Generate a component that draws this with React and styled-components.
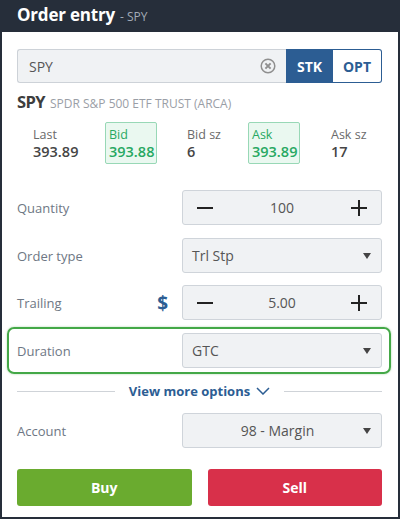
import styled, { createGlobalStyle } from 'styled-components';

const GlobalStyle = createGlobalStyle`
  html, body {
    margin: 0;
    padding: 0;
    background: #fff;
  }
  body {
    font-family: 'Open Sans', 'Liberation Sans', sans-serif;
  }
`;

const Panel = styled.div`
  width: 400px;
  height: 519px;
  box-sizing: border-box;
  border: 2px solid #262e3a;
  border-top: 0;
  background: #fff;
  display: flex;
  flex-direction: column;
`;

const Header = styled.div`
  height: 32px;
  background: #262e3a;
  display: flex;
  align-items: baseline;
  padding: 3px 15px 0;
  box-sizing: border-box;
  gap: 5px;
`;

const Title = styled.span`
  color: #fff;
  font-size: 17px;
  font-weight: 700;
  letter-spacing: -0.2px;
`;

const SubTitle = styled.span`
  color: #a3abb6;
  font-size: 12px;
`;

const Body = styled.div`
  flex: 1;
  padding: 17px 16px 0 15px;
  display: flex;
  flex-direction: column;
`;

const SearchRow = styled.div`
  display: flex;
  height: 34px;
`;

const SearchField = styled.div`
  flex: 1;
  display: flex;
  align-items: center;
  background: #f0f2f4;
  border: 1px solid #cdd2d8;
  border-right: 0;
  border-radius: 3px 0 0 3px;
  padding: 0 10px 0 11px;
  color: #555;
  font-size: 14px;
`;

const SearchText = styled.span`
  flex: 1;
`;

const Toggle = styled.button`
  width: ${(p) => (p.active ? 47 : 49)}px;
  border: 1px solid #2c5d93;
  border-left-width: ${(p) => (p.active ? 1 : 0)}px;
  border-radius: ${(p) => (p.active ? '0' : '0 3px 3px 0')};
  background: ${(p) => (p.active ? '#2c5d93' : '#fff')};
  color: ${(p) => (p.active ? '#fff' : '#2c5d93')};
  font-family: inherit;
  font-size: 14px;
  font-weight: 700;
  padding: 0;
`;

const SymbolLine = styled.div`
  margin-top: 9px;
  height: 20px;
  line-height: 20px;
  display: flex;
  align-items: baseline;
  gap: 5px;
  white-space: nowrap;
`;

const Symbol = styled.span`
  font-size: 16.5px;
  font-weight: 700;
  letter-spacing: -0.6px;
  color: #3d3d3d;
`;

const SymbolName = styled.span`
  font-size: 12px;
  color: #9a9ea6;
`;

const Quotes = styled.div`
  margin-top: 10px;
  display: grid;
  grid-template-columns: 77px 77px 66px 78px 1fr;
  padding-left: 11px;
`;

const Quote = styled.div`
  width: 52px;
  height: 42px;
  box-sizing: border-box;
  margin-left: ${(p) => (p.boxed ? '0' : '4px')};
  padding: 4px 3px;
  border: ${(p) => (p.boxed ? '1px solid #98d8b6' : '1px solid transparent')};
  background: ${(p) => (p.boxed ? '#eaf8f0' : 'transparent')};
  border-radius: 2px;
  color: ${(p) => (p.boxed ? '#27a862' : '#454545')};
  white-space: nowrap;
  ${(p) => !p.boxed && 'padding-left: 0;'}
`;

const QuoteLabel = styled.div`
  font-size: 12.5px;
  line-height: 16px;
  color: ${(p) => (p.green ? '#27a862' : '#6a6a6a')};
`;

const QuoteValue = styled.div`
  font-size: 14.5px;
  font-weight: 600;
  line-height: 18px;
`;

const FieldRow = styled.div`
  display: flex;
  align-items: center;
  margin-top: ${(p) => p.gap}px;
  ${(p) =>
    p.highlight &&
    `
    margin-left: -10px;
    margin-right: -9px;
    padding: 4px 7px 4px 8px;
    border: 2px solid #44a847;
    border-radius: 7px;
    box-shadow: 0 0 2px rgba(68, 168, 71, 0.5);
  `}
`;

const Label = styled.div`
  flex: 1;
  font-size: 13px;
  color: #6e7784;
  display: flex;
  align-items: center;
  justify-content: space-between;
  padding-right: 14px;
`;

const Dollar = styled.span`
  color: #2c5d93;
  font-size: 19px;
  font-weight: 700;
`;

const Control = styled.div`
  width: 200px;
  height: 35px;
  box-sizing: border-box;
  background: #f0f2f4;
  border: 1px solid #cfd4da;
  border-radius: 3px;
  display: flex;
  align-items: center;
  font-size: 14px;
  color: #555;
`;

const StepButton = styled.span`
  width: 44px;
  display: flex;
  justify-content: center;
`;

const StepValue = styled.span`
  flex: 1;
  text-align: center;
`;

const SelectText = styled.span`
  flex: 1;
  padding-left: 9px;
  text-align: ${(p) => (p.center ? 'center' : 'left')};
`;

const Caret = styled.span`
  width: 0;
  height: 0;
  border-left: 4px solid transparent;
  border-right: 4px solid transparent;
  border-top: 6px solid #444;
  margin-right: 10px;
`;

const Divider = styled.div`
  margin-top: 8px;
  display: flex;
  align-items: center;
  gap: 14px;
  &::before,
  &::after {
    content: '';
    flex: 1;
    height: 1px;
    background: #cfd3d8;
  }
`;

const MoreLink = styled.span`
  color: #2c5d93;
  font-size: 13px;
  font-weight: 700;
  display: flex;
  align-items: center;
  gap: 6px;
`;

const Actions = styled.div`
  margin-top: 21px;
  display: grid;
  grid-template-columns: 1fr 1fr;
  gap: 16px;
`;

const ActionButton = styled.button`
  height: 37px;
  border: 0;
  border-radius: 3px;
  background: ${(p) => (p.sell ? '#d8304a' : '#6aab2f')};
  color: #fff;
  font-family: inherit;
  font-size: 14px;
  font-weight: 700;
`;

const ClearIcon = () => (
  <svg width="16" height="16" viewBox="0 0 16 16">
    <circle cx="8" cy="8" r="6.8" fill="none" stroke="#8f8f8f" strokeWidth="1.5" />
    <path d="M5.4 5.4 L10.6 10.6 M10.6 5.4 L5.4 10.6" stroke="#8f8f8f" strokeWidth="2" />
  </svg>
);

const Minus = () => (
  <svg width="16" height="16" viewBox="0 0 16 16">
    <path d="M0 8 H16" stroke="#222" strokeWidth="2" />
  </svg>
);

const Plus = () => (
  <svg width="16" height="16" viewBox="0 0 16 16">
    <path d="M0 8 H16 M8 0 V16" stroke="#222" strokeWidth="2" />
  </svg>
);

const Chevron = () => (
  <svg width="14" height="8" viewBox="0 0 14 8">
    <path d="M1 1 L7 7 L13 1" fill="none" stroke="#2c5d93" strokeWidth="1.5" />
  </svg>
);

const Stepper = ({ value }) => (
  <Control>
    <StepButton>
      <Minus />
    </StepButton>
    <StepValue>{value}</StepValue>
    <StepButton>
      <Plus />
    </StepButton>
  </Control>
);

const Select = ({ value, center }) => (
  <Control>
    <SelectText center={center}>{value}</SelectText>
    <Caret />
  </Control>
);

const quotes = [
  { label: 'Last', value: '393.89' },
  { label: 'Bid', value: '393.88', boxed: true },
  { label: 'Bid sz', value: '6' },
  { label: 'Ask', value: '393.89', boxed: true },
  { label: 'Ask sz', value: '17' },
];

export default function App() {
  return (
    <>
      <GlobalStyle />
      <Panel>
        <Header>
          <Title>Order entry</Title>
          <SubTitle>- SPY</SubTitle>
        </Header>
        <Body>
          <SearchRow>
            <SearchField>
              <SearchText>SPY</SearchText>
              <ClearIcon />
            </SearchField>
            <Toggle active>STK</Toggle>
            <Toggle>OPT</Toggle>
          </SearchRow>

          <SymbolLine>
            <Symbol>SPY</Symbol>
            <SymbolName>SPDR S&amp;P 500 ETF TRUST (ARCA)</SymbolName>
          </SymbolLine>

          <Quotes>
            {quotes.map((q) => (
              <Quote key={q.label} boxed={q.boxed}>
                <QuoteLabel green={q.boxed}>{q.label}</QuoteLabel>
                <QuoteValue>{q.value}</QuoteValue>
              </Quote>
            ))}
          </Quotes>

          <FieldRow gap={26}>
            <Label>Quantity</Label>
            <Stepper value="100" />
          </FieldRow>
          <FieldRow gap={13}>
            <Label>Order type</Label>
            <Select value="Trl Stp" />
          </FieldRow>
          <FieldRow gap={12}>
            <Label>
              Trailing <Dollar>$</Dollar>
            </Label>
            <Stepper value="5.00" />
          </FieldRow>
          <FieldRow gap={7} highlight>
            <Label>Duration</Label>
            <Select value="GTC" />
          </FieldRow>

          <Divider>
            <MoreLink>
              View more options <Chevron />
            </MoreLink>
          </Divider>

          <FieldRow gap={13}>
            <Label>Account</Label>
            <Select value="98 - Margin" center />
          </FieldRow>

          <Actions>
            <ActionButton>Buy</ActionButton>
            <ActionButton sell>Sell</ActionButton>
          </Actions>
        </Body>
      </Panel>
    </>
  );
}
